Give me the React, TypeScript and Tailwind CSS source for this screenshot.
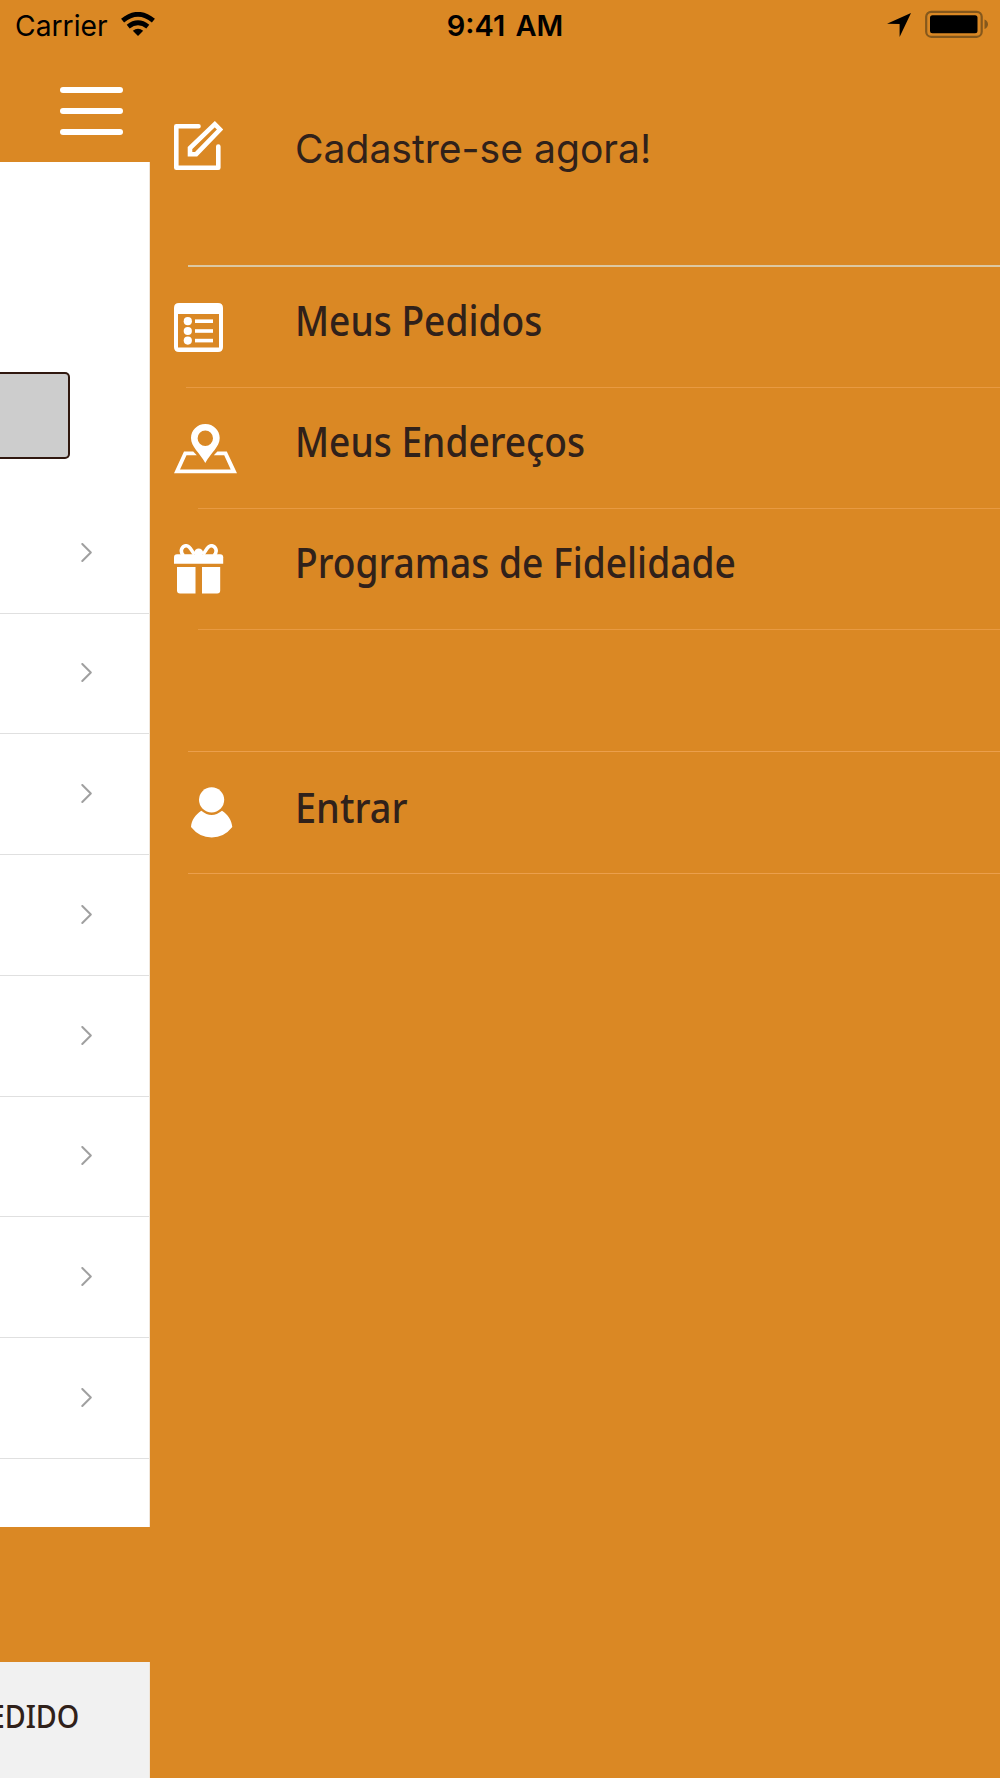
import type { ReactNode } from "react";

const EditIcon = () => (
  <svg width="49" height="50" viewBox="0 0 49 50" fill="none" stroke="#fff" strokeWidth="4.6" strokeLinecap="round" strokeLinejoin="round">
    <path d="M24.5 5.3H2.3V46.7H44.3V25.6" />
    <path d="M16 27V33.2H22.2L46 8.5 40.8 3.2Z" strokeLinejoin="miter" />
  </svg>
);

const ListIcon = () => (
  <svg width="49" height="49" viewBox="0 0 49 49" fill="#fff">
    <path fillRule="evenodd" d="M5 0H44Q49 0 49 5V44Q49 49 44 49H5Q0 49 0 44V5Q0 0 5 0ZM4 11V44.6H45V11Z" />
    {[18.2, 28, 37.6].map((y) => (
      <g key={y}>
        <circle cx="13.8" cy={y} r="4.1" />
        <rect x="21" y={y - 1.8} width="18" height="3.6" />
      </g>
    ))}
  </svg>
);

const PinIcon = () => (
  <svg width="63" height="50" viewBox="0 0 63 50" fill="#fff">
    <path fillRule="evenodd" d="M31.3 0C39.5 0 45.7 6.4 45.7 14C45.7 23 37 28.5 31.3 39C25.6 28.5 17 23 17 14C17 6.4 23.1 0 31.3 0ZM31.3 6.5A7.7 7.7 0 1 0 31.3 21.9A7.7 7.7 0 1 0 31.3 6.5Z" />
    <path d="M10 27.5H19.2L22.8 31.3H12.5L6 45.5H56.7L50.2 31.3H39.8L43.4 27.5H52.8L63 49.3H0Z" />
  </svg>
);

const GiftIcon = () => (
  <svg width="50" height="50" viewBox="0 0 50 50" fill="#fff">
    <path d="M3 10.3H46.2Q49.2 10.3 49.2 13.3V19.8H0V13.3Q0 10.3 3 10.3Z" />
    <path d="M3 23H21.5V49.5H6Q3 49.5 3 46.5Z M28 23H46.2V46.5Q46.2 49.5 43.2 49.5H28Z" />
    <path d="M9.5 11.5C5 7 8.5 1.4 12.5 1.8C16 2.2 17 6 20.5 10.5 M40 11.5C44.5 7 41 1.4 37 1.8C33.5 2.2 32.5 6 29 10.5" fill="none" stroke="#fff" strokeWidth="3.6" />
    <ellipse cx="24.7" cy="8.6" rx="4.4" ry="4" />
  </svg>
);

const UserIcon = () => (
  <svg width="42" height="51" viewBox="0 0 42 51" fill="#fff">
    <circle cx="20.6" cy="12.8" r="12.6" />
    <path d="M10.3 23.7Q20.6 32.2 31 23.7C37 27.5 40.5 33 41.3 40Q33 50.5 20.7 50.5T0 40C.5 33 4.5 27.5 10.3 23.7Z" />
  </svg>
);

const WifiIcon = () => (
  <svg width="34" height="24" viewBox="0 0 34 24">
    <g fill="none" stroke="#000" strokeWidth="4.8">
      <path d="M1.6 8.6Q17-4 32.4 8.6" />
      <path d="M7.2 14.6Q17 7 26.8 14.6" />
    </g>
    <path d="M11.8 18.7Q17 15 22.2 18.7L17 24Z" />
  </svg>
);

const Chevron = () => (
  <svg width="12" height="20" viewBox="0 0 12 20" fill="none" stroke="#a0a0a0" strokeWidth="2" strokeLinecap="round" strokeLinejoin="round">
    <path d="M1.3 1 9.8 9.5 1.3 18" />
  </svg>
);

type RowProps = { height: string; line: string; iconBox?: string; icon?: ReactNode; text?: string; textClass?: string };

const MenuRow = ({ height, line, iconBox = "", icon, text, textClass = "" }: RowProps) => (
  <li className={`flex flex-col ${height}`}>
    <div className="flex flex-1">
      <div className={`w-[145px] shrink-0 ${iconBox}`}>{icon}</div>
      <span className={`origin-left self-start whitespace-nowrap ${textClass}`}>{text}</span>
    </div>
    <div className={`shrink-0 ${line}`} />
  </li>
);

export default function App() {
  return (
    <div className="relative flex h-[1778px] w-[1000px] overflow-hidden bg-[#da8824] text-[#30211a]">
      <aside className="flex w-[150px] shrink-0 flex-col overflow-hidden">
        <div className="flex h-[162px] shrink-0 flex-col gap-[15px] pl-[60px] pt-[87px]">
          <i className="h-[6px] w-[63px] rounded-full bg-white" />
          <i className="h-[6px] w-[63px] rounded-full bg-white" />
          <i className="h-[6px] w-[63px] rounded-full bg-white" />
        </div>
        <div className="h-[1365px] shrink-0 overflow-hidden border-r border-[#f0e6da] bg-white pt-[210px]">
          <div className="h-[87px] w-[70px] rounded-r-[5px] border-2 border-l-0 border-[#30180f] bg-[#cdcdcd]" />
          <ul className="pt-[33.8px]">
            {Array.from({ length: 8 }, (_, i) => (
              <li key={i} className="flex h-[120.75px] items-center border-b border-[#e0e0e0] pl-[81px]">
                <Chevron />
              </li>
            ))}
          </ul>
        </div>
        <div className="mt-[135px] flex flex-1 justify-end border-r border-[#f0e6da] bg-[#f1f1f1] pr-[70px] pt-[32px]">
          <span className="origin-right scale-x-[0.87] whitespace-nowrap font-['Noto_Sans'] text-[33px] font-medium leading-[44px]">PEDIDO</span>
        </div>
      </aside>

      <nav className="flex-1">
        <ul>
          <MenuRow height="h-[267px]" line="ml-[38px] h-[2px] bg-[#dcc8a2]" iconBox="pl-[24px] pt-[120.5px]" icon={<EditIcon />} text="Cadastre-se agora!" textClass="mt-[125px] scale-x-[0.977] font-['Inter'] text-[40px] leading-[48px]" />
          <MenuRow height="h-[121px]" line="ml-[36px] h-px bg-[#e89a42]" iconBox="pl-[24px] pt-[36px]" icon={<ListIcon />} text="Meus Pedidos" textClass="mt-[25px] scale-x-[0.906] font-['Noto_Sans'] text-[41px] font-medium leading-[56px]" />
          <MenuRow height="h-[121px]" line="ml-[48px] h-px bg-[#e89a42]" iconBox="pl-[24px] pt-[35.5px]" icon={<PinIcon />} text="Meus Endereços" textClass="mt-[25px] scale-x-[0.906] font-['Noto_Sans'] text-[41px] font-medium leading-[56px]" />
          <MenuRow height="h-[121px]" line="ml-[48px] h-px bg-[#e89a42]" iconBox="pl-[24px] pt-[34.5px]" icon={<GiftIcon />} text="Programas de Fidelidade" textClass="mt-[25px] scale-x-[0.907] font-['Noto_Sans'] text-[41px] font-medium leading-[56px]" />
          <MenuRow height="h-[122px]" line="ml-[38px] h-px bg-[#eb9f4c]" />
          <MenuRow height="h-[122px]" line="ml-[38px] h-px bg-[#eb9f4c]" iconBox="pl-[41px] pt-[35px]" icon={<UserIcon />} text="Entrar" textClass="mt-[27px] scale-x-[0.925] font-['Noto_Sans'] text-[41px] font-medium leading-[56px]" />
        </ul>
      </nav>

      <header className="absolute inset-x-0 top-0 grid h-[50px] grid-cols-3 font-['Inter'] text-[29px] leading-[35px] text-black">
        <div className="flex pl-[15px]">
          <span className="mt-[7.5px] w-[106px] origin-left scale-x-[0.974]">Carrier</span>
          <span className="mt-[12px]"><WifiIcon /></span>
        </div>
        <div className="flex justify-center pl-[10px]">
          <span className="mt-[7.5px] whitespace-nowrap font-semibold [word-spacing:3px]">9:41 AM</span>
        </div>
        <div className="flex justify-end pr-[12px] pt-[10px]">
          <svg width="101" height="29" viewBox="0 0 101 29">
            <path d="M0 13.8 24 3 12.6 27V13.9Z" />
            <rect x="39.2" y="1.8" width="55.5" height="25" rx="5" fill="none" stroke="#85581c" strokeWidth="2.2" />
            <rect x="43" y="5.3" width="47.5" height="18" rx="2.5" />
            <path d="M97.5 9.5Q101 11 101 14.3T97.5 19Z" fill="#85581c" />
          </svg>
        </div>
      </header>
    </div>
  );
}
